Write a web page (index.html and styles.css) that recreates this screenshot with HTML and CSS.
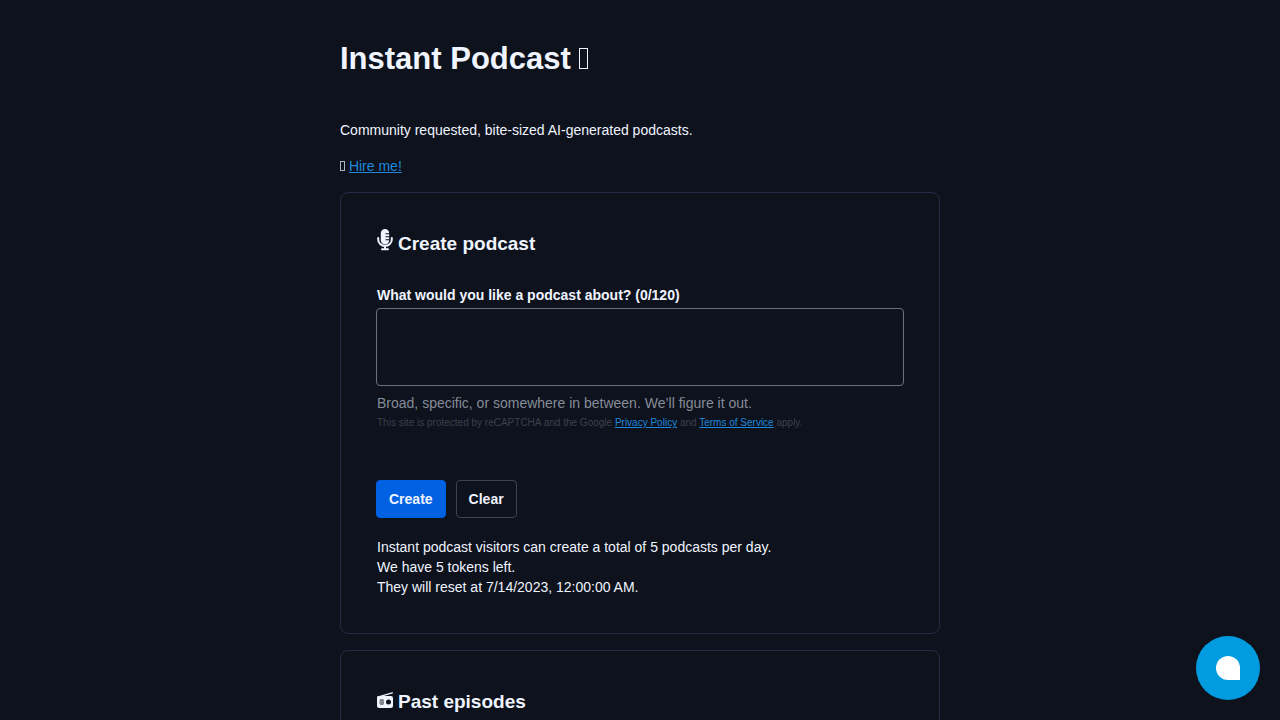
FILE: index.html
```html
<!DOCTYPE html>
<html lang="en">
	<head>
		<meta charset="UTF-8" />
		<meta name="viewport" content="width=device-width, initial-scale=1" />
		<title>Instant Podcast</title>
		<link rel="stylesheet" href="styles.css">
	</head>
	<body>
		<main class="container">
			<h1>Instant Podcast <span class="glyph"></span></h1>
			<p>Community requested, bite-sized AI-generated podcasts.</p>
			<p><span class="glyph glyph-small"></span> <a href="#hire">Hire me!</a></p>

			<!-- Create form -->
			<section class="panel">
				<h2>
					<svg class="icon-mic" viewBox="0 0 16 22" aria-hidden="true">
						<path fill="currentColor" d="M8 0a4.2 4.2 0 0 1 4.2 4.2H8.5v1h3.7v2H8.5v1h3.7v2H8.5v1h3.7a4.2 4.2 0 0 1-8.4 0v-7A4.2 4.2 0 0 1 8 0z" />
						<path fill="none" stroke="currentColor" stroke-width="2" stroke-linecap="round" d="M1.2 9v1.5a6.8 6.5 0 0 0 13.6 0V9M8 17v3M5 20.2h6" />
					</svg>
					Create podcast
				</h2>
				<form>
					<label for="topic">What would you like a podcast about? (0/120)</label>
					<textarea id="topic" maxlength="120"></textarea>
					<p class="hint">Broad, specific, or somewhere in between. We’ll figure it out.</p>
					<p class="legal">This site is protected by reCAPTCHA and the Google <a href="#privacy">Privacy Policy</a> and <a href="#terms">Terms of Service</a> apply.</p>
					<div class="actions">
						<button type="submit" class="primary">Create</button>
						<button type="reset">Clear</button>
					</div>
				</form>
				<p class="tokens">
					Instant podcast visitors can create a total of 5 podcasts per day.<br />
					We have 5 tokens left.<br />
					They will reset at 7/14/2023, 12:00:00 AM.
				</p>
			</section>

			<!-- Episode list -->
			<section class="panel">
				<h2>
					<svg class="icon-radio" viewBox="0 0 16 16" aria-hidden="true">
						<path fill="none" stroke="currentColor" stroke-width="1.4" stroke-linecap="round" d="M1.5 4.8 15.2.8" />
						<path fill="currentColor" fill-rule="evenodd" d="M1 4h13a2 2 0 0 1 2 2v8a2 2 0 0 1-2 2H2a2 2 0 0 1-2-2V5zM11.5 7.5a2.5 2.5 0 1 0 0 5 2.5 2.5 0 0 0 0-5z" />
						<path fill="#858990" d="M3 7h3.5v1H7v4h-.5v1H3v-1h-.5V8H3z" />
					</svg>
					Past episodes
				</h2>
			</section>
		</main>

		<button type="button" class="chat" aria-label="Open chat">
			<svg viewBox="0 0 24 24" aria-hidden="true">
				<path fill="#fff" d="M12 0a12 12 0 0 1 12 12v12H12a12 12 0 0 1 0-24z" />
			</svg>
		</button>
	</body>
</html>
```
FILE: styles.css
```css
* {
	box-sizing: border-box;
}
body {
	margin: 0;
	padding: 0 20px;
	background: #0d121c;
	color: #f0f4ff;
	font-family: "Liberation Sans", Arial, sans-serif;
	font-size: 14px;
	line-height: 20px;
}
.container {
	max-width: 600px;
	margin: 0 auto;
	padding: 40px 0;
}
h1 {
	margin: 0 0 42px;
	font-size: 31px;
	line-height: 38px;
}
h2 {
	display: flex;
	align-items: center;
	gap: 5px;
	margin: 0 0 26px;
	font-size: 19px;
	line-height: 30px;
}
h2 svg {
	width: 16px;
	margin-bottom: 8px;
}
.icon-mic {
	height: 22px;
}
h2 .icon-radio {
	height: 16px;
	margin-bottom: 4px;
}
p {
	margin: 0 0 16px;
}
a {
	color: #1e88dc;
}
/* empty box glyph */
.glyph {
	display: inline-block;
	width: 9px;
	height: 21px;
	border: 1px solid currentColor;
}
.glyph-small {
	width: 5px;
	height: 10px;
	color: #aeb2bc;
}
.panel {
	margin-bottom: 16px;
	padding: 36px;
	border: 1px solid #222c48;
	border-radius: 8px;
}
label {
	display: block;
	font-weight: bold;
}
textarea {
	display: block;
	width: calc(100% + 2px);
	height: 78px;
	margin: 3px -1px 7px;
	padding: 8px 12px;
	background: transparent;
	border: 1px solid #6b707b;
	border-radius: 4px;
	color: inherit;
	font: inherit;
	resize: none;
}
.hint {
	margin: 0;
	color: #868c99;
}
.legal {
	margin: 0;
	color: #3b414d;
	font-size: 10px;
}
.actions {
	display: flex;
	gap: 10px;
	margin: 47px -1px 19px;
}
.actions button {
	padding: 8px 12px;
	background: transparent;
	border: 1px solid #3b4252;
	border-radius: 4px;
	color: #f0f4ff;
	font: inherit;
	font-weight: bold;
	cursor: pointer;
}
.actions .primary {
	background: #0062e3;
	border-color: #0062e3;
}
.tokens {
	margin: 0;
}
.chat {
	position: fixed;
	right: 20px;
	bottom: 20px;
	display: flex;
	align-items: center;
	justify-content: center;
	width: 64px;
	height: 64px;
	padding: 0;
	background: #019ce0;
	border: 0;
	border-radius: 50%;
	cursor: pointer;
}
.chat svg {
	width: 24px;
	height: 24px;
}
```
